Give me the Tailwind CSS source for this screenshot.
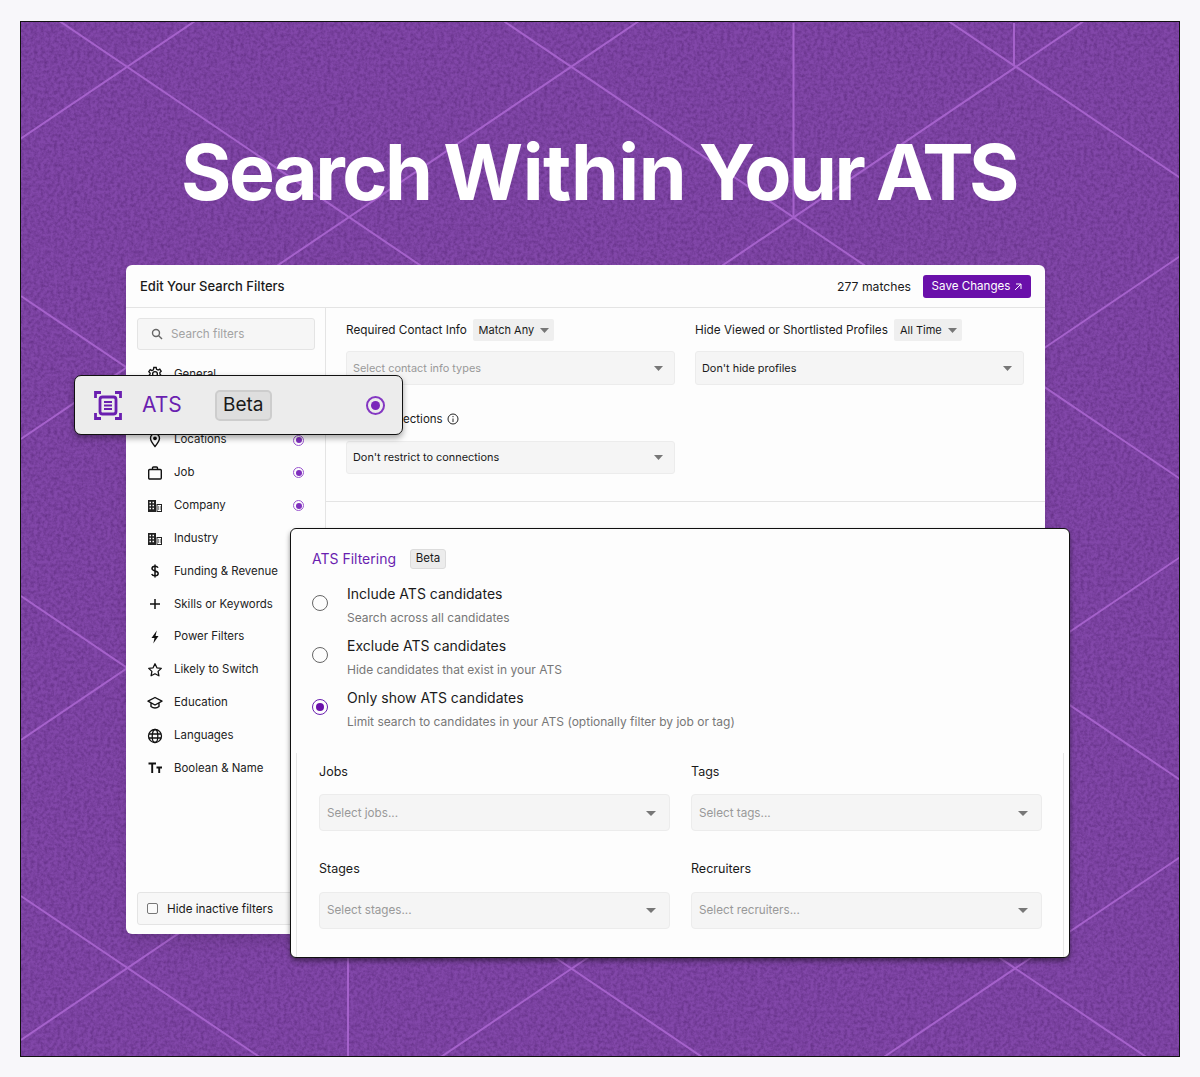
<!DOCTYPE html>
<html lang="en">
<head>
    <meta charset="UTF-8">
    <meta name="viewport" content="width=device-width, initial-scale=1.0">
    <script src="https://cdn.jsdelivr.net/npm/@tailwindcss/browser@4"></script>
    <title>Search Within Your ATS</title>
</head>
<body class="bg-[#f8f7fa] font-['Inter',sans-serif] text-[#1a1a1a]">
    <div class="relative ml-[20px] mt-[21px] w-[1160px] h-[1036px] border border-[#111] bg-[#8247a9] overflow-hidden">

        <!-- backdrop: noise and lattice lines -->
        <svg class="absolute inset-0" width="1160" height="1036" viewBox="20 21 1160 1036" fill="none">
            <filter id="grain" x="0" y="0" width="100%" height="100%" color-interpolation-filters="sRGB">
                <feTurbulence type="fractalNoise" baseFrequency="0.3" numOctaves="3" seed="4"/>
                <feColorMatrix values="0 0 0 0 0.3  0 0 0 0 0.12  0 0 0 0 0.42  0 0 0 0.9 -0.3"/>
            </filter>
            <rect x="20" y="21" width="1160" height="1036" filter="url(#grain)"/>
            <g stroke="#a562cb" stroke-width="2">
                <path d="M20 -6L1200 793M20 295L1200 1093M20 595L800 1123M20 895L300 1084M470 -2L1200 492M900 -12L1200 191"/>
                <path d="M20 137.500L240 -11M20 438L700 -22M20 739L1150 -25.500M20 1039L1200 241M434 1060L1200 542M877 1060L1200 842"/>
                <path d="M792.500 22V217M1013 22V65M347 900V1057"/>
            </g>
        </svg>

        <h1 class="relative pt-[105px] pr-[4px] text-center text-[77px] leading-[90px] font-bold tracking-[-2.500px] [word-spacing:-3px] text-white">Search <span class="tracking-[-0.500px]">Within</span> Your <span class="tracking-[-4.500px]">ATS</span></h1>

        <!-- filters card -->
        <div class="relative ml-[105px] mt-[48px] w-[919px] h-[669px] bg-[#fdfdfd] rounded-md shadow-lg flex flex-col overflow-hidden">
            <div class="h-[43px] shrink-0 flex items-center justify-between pl-[14px] pr-[14px] border-b border-[#e4e4e4]">
                <div class="mt-[2px] text-[13px] font-medium">Edit Your Search Filters</div>
                <div class="flex items-center gap-3">
                    <span class="mt-[2px] text-[12.200px]">277 matches</span>
                    <button class="w-[108px] h-[23px] pt-[1px] bg-[#6a10aa] text-white text-[11.600px] rounded-[3px] flex items-center justify-center gap-1">Save Changes
                        <svg width="8" height="8" viewBox="0 0 8 8" fill="none" stroke="#fff"><path d="M1 7L7 1M2 1H7V6"/></svg>
                    </button>
                </div>
            </div>
            <div class="flex flex-1 min-h-0">
                <aside class="w-[200px] shrink-0 border-r border-[#e4e4e4] pl-[11px] pr-[10px] pt-[10px] flex flex-col">
                    <div class="h-[32px] bg-[#f6f6f6] border border-[#e4e4e4] rounded-[3px] flex items-center pl-[13px] gap-[8px] text-[11.700px] text-[#a3a3a3]">
                        <svg width="12" height="12" viewBox="0 0 12 12" fill="none" stroke="#666" stroke-width="1.400"><circle cx="5" cy="5" r="3.500"/><path d="M7.700 7.700L11 11"/></svg>
                        <span class="mt-[1px]">Search filters</span>
                    </div>
                    <nav class="mt-[8px] text-[11.450px] text-[#222]">
                        <div class="h-[32.830px] flex items-center pl-[10px] gap-[11px]">
                            <svg width="16" height="16" viewBox="0 0 16 16" fill="none" stroke="#111" stroke-width="1.300"><circle cx="8" cy="8" r="2.400"/><path d="M6.800 1.500h2.400l.4 1.900 1.500.7 1.700-1 1.400 2-1.300 1.400v1.600l1.300 1.400-1.400 2-1.700-1-1.500.7-.4 1.900H6.800l-.4-1.900-1.500-.7-1.700 1-1.400-2 1.300-1.400V7L1.800 5.600l1.400-2 1.700 1 1.500-.7z"/></svg>
                            General
                        </div>
                        <div class="h-[32.830px]"></div>
                        <div class="h-[32.830px] flex items-center pl-[10px] gap-[11px]">
                            <svg width="16" height="16" viewBox="0 0 16 16" fill="none" stroke="#111" stroke-width="1.400"><path d="M8 14.500C5.500 11.500 3.500 9 3.500 6.300a4.500 4.500 0 0 1 9 0C12.500 9 10.500 11.500 8 14.500z"/><circle cx="8" cy="6.300" r="1.200" fill="#111"/></svg>
                            <span class="flex-1">Locations</span>
                            <span class="mr-[11px] w-[11px] h-[11px] rounded-full border border-[#9a55cf] flex items-center justify-center"><span class="w-[6px] h-[6px] rounded-full bg-[#7f2fbd]"></span></span>
                        </div>
                        <div class="h-[32.830px] flex items-center pl-[10px] gap-[11px]">
                            <svg width="16" height="16" viewBox="0 0 16 16" fill="none" stroke="#111" stroke-width="1.400"><rect x="1.700" y="4.500" width="12.600" height="9.500" rx="1"/><path d="M5.500 4.500V3a1 1 0 0 1 1-1h3a1 1 0 0 1 1 1v1.500"/></svg>
                            <span class="flex-1">Job</span>
                            <span class="mr-[11px] w-[11px] h-[11px] rounded-full border border-[#9a55cf] flex items-center justify-center"><span class="w-[6px] h-[6px] rounded-full bg-[#7f2fbd]"></span></span>
                        </div>
                        <div class="h-[32.830px] flex items-center pl-[10px] gap-[11px]">
                            <svg width="16" height="16" viewBox="0 0 16 16" fill="#222"><path d="M1 2h8v12H1zM9.500 6H15v8H9.500z"/><path fill="#fff" d="M2.500 3.800h1.500v1.500H2.500zM5.500 3.800H7v1.500H5.500zM2.500 6.800h1.500v1.500H2.500zM5.500 6.800H7v1.500H5.500zM2.500 9.800h1.500v1.500H2.500zM5.500 9.800H7v1.500H5.500zM10.500 7h3.500v6h-3.500z"/><path d="M11 8.500h1v1h-1zM12.800 8.500h1v1h-1zM11 10.500h1v1h-1zM12.800 10.500h1v1h-1z"/></svg>
                            <span class="flex-1">Company</span>
                            <span class="mr-[11px] w-[11px] h-[11px] rounded-full border border-[#9a55cf] flex items-center justify-center"><span class="w-[6px] h-[6px] rounded-full bg-[#7f2fbd]"></span></span>
                        </div>
                        <div class="h-[32.830px] flex items-center pl-[10px] gap-[11px]">
                            <svg width="16" height="16" viewBox="0 0 16 16" fill="#222"><path d="M1 2h8v12H1zM9.500 6H15v8H9.500z"/><path fill="#fff" d="M2.500 3.800h1.500v1.500H2.500zM5.500 3.800H7v1.500H5.500zM2.500 6.800h1.500v1.500H2.500zM5.500 6.800H7v1.500H5.500zM2.500 9.800h1.500v1.500H2.500zM5.500 9.800H7v1.500H5.500zM10.500 7h3.500v6h-3.500z"/><path d="M11 8.500h1v1h-1zM12.800 8.500h1v1h-1zM11 10.500h1v1h-1zM12.800 10.500h1v1h-1z"/></svg>
                            Industry
                        </div>
                        <div class="h-[32.830px] flex items-center pl-[10px] gap-[11px]">
                            <svg width="16" height="16" viewBox="0 0 16 16" fill="none" stroke="#111" stroke-width="1.500"><path d="M8 1.500v13M11 4.800C10.500 3.700 9.400 3.200 8 3.200c-1.800 0-3 .9-3 2.300 0 3.200 6.200 1.700 6.200 5 0 1.400-1.300 2.300-3.200 2.300-1.600 0-2.800-.6-3.300-1.800"/></svg>
                            Funding &amp; Revenue
                        </div>
                        <div class="h-[32.830px] flex items-center pl-[10px] gap-[11px]">
                            <svg width="16" height="16" viewBox="0 0 16 16" fill="none" stroke="#111" stroke-width="1.500"><path d="M8 3v10M3 8h10"/></svg>
                            Skills or Keywords
                        </div>
                        <div class="h-[32.830px] flex items-center pl-[10px] gap-[11px]">
                            <svg width="16" height="16" viewBox="0 0 16 16" fill="#111"><path d="M9.800 1.500L4.500 9h3l-1.200 5.500L11.500 7H8.500z"/></svg>
                            Power Filters
                        </div>
                        <div class="h-[32.830px] flex items-center pl-[10px] gap-[11px]">
                            <svg width="16" height="16" viewBox="0 0 16 16" fill="none" stroke="#111" stroke-width="1.300" stroke-linejoin="round"><path d="M8 1.800l1.900 4 4.400.6-3.200 3 .8 4.400L8 11.700l-3.900 2.100.8-4.400-3.200-3 4.400-.6z"/></svg>
                            Likely to Switch
                        </div>
                        <div class="h-[32.830px] flex items-center pl-[10px] gap-[11px]">
                            <svg width="16" height="16" viewBox="0 0 16 16" fill="none" stroke="#111" stroke-width="1.400" stroke-linejoin="round"><path d="M8 2.500L1 6.200 8 10l7-3.800zM4 8v3.500c1.200 1 2.500 1.500 4 1.500s2.800-.5 4-1.500V8"/></svg>
                            Education
                        </div>
                        <div class="h-[32.830px] flex items-center pl-[10px] gap-[11px]">
                            <svg width="16" height="16" viewBox="0 0 16 16" fill="none" stroke="#111" stroke-width="1.300"><circle cx="8" cy="8" r="6.500"/><ellipse cx="8" cy="8" rx="2.800" ry="6.500"/><path d="M1.800 6h12.400M1.800 10h12.400"/></svg>
                            Languages
                        </div>
                        <div class="h-[32.830px] flex items-center pl-[10px] gap-[11px]">
                            <svg width="16" height="16" viewBox="0 0 16 16" fill="none" stroke="#111" stroke-width="1.900"><path d="M1.500 3.500h7.500M5.200 3.500V13M9.500 7.500h5.500M12.200 7.500V13"/></svg>
                            Boolean &amp; Name
                        </div>
                    </nav>
                    <div class="mt-auto mb-[9px] h-[33px] w-[200px] shrink-0 bg-[#f7f7f7] border border-[#e4e4e4] rounded-[3px] flex items-center pl-[9px] gap-[9px] text-[11.700px]">
                        <span class="w-[11px] h-[11px] border border-[#777] rounded-[2px] bg-[#fafafa]"></span>
                        <span class="mt-[2px]">Hide inactive filters</span>
                    </div>
                </aside>

                <main class="flex-1 min-w-0">
                    <div class="pl-[20px] pr-[21px] h-[194px] border-b border-[#e4e4e4] grid grid-cols-[329px_329px] gap-x-[20px] content-start">
                        <div class="pt-[11px]">
                            <div class="flex items-center gap-[6px] text-[11.750px] h-[22px]">
                                <span class="mt-[2px]">Required Contact Info</span>
                                <span class="w-[81px] h-[22px] pl-[1px] bg-[#efefef] rounded-[2px] text-[11px] flex items-center justify-center gap-[6px]">Match Any
                                    <svg width="9" height="5" viewBox="0 0 9 5" fill="#777"><path d="M0 0h9L4.500 5z"/></svg>
                                </span>
                            </div>
                            <div class="mt-[10px] h-[34px] bg-[#f5f5f5] border border-[#ececec] rounded-[3px] flex items-center justify-between pl-[6px] pr-[11px] text-[10.900px] text-[#999]">
                                Select contact info types
                                <svg width="9" height="5" viewBox="0 0 9 5" fill="#777"><path d="M0 0h9L4.500 5z"/></svg>
                            </div>
                        </div>
                        <div class="pt-[11px]">
                            <div class="flex items-center gap-[6px] text-[11.750px] h-[22px]">
                                <span class="mt-[2px]">Hide Viewed or Shortlisted Profiles</span>
                                <span class="w-[68px] h-[22px] pl-[1px] bg-[#efefef] rounded-[2px] text-[11px] flex items-center justify-center gap-[6px]">All Time
                                    <svg width="9" height="5" viewBox="0 0 9 5" fill="#777"><path d="M0 0h9L4.500 5z"/></svg>
                                </span>
                            </div>
                            <div class="mt-[10px] h-[34px] bg-[#f5f5f5] border border-[#ececec] rounded-[3px] flex items-center justify-between pl-[6px] pr-[11px] text-[10.900px]">
                                Don't hide profiles
                                <svg width="9" height="5" viewBox="0 0 9 5" fill="#777"><path d="M0 0h9L4.500 5z"/></svg>
                            </div>
                        </div>
                        <div class="pt-[23px]">
                            <div class="flex items-center gap-[4px] text-[11.500px] h-[22px]">
                                <span class="mt-[2px]">Your Connections</span>
                                <svg width="12" height="12" viewBox="0 0 12 12" fill="none" stroke="#222"><circle cx="6" cy="6" r="5"/><path d="M6 5.500V9M6 3v1.200"/></svg>
                            </div>
                            <div class="mt-[11px] h-[33px] bg-[#f5f5f5] border border-[#ececec] rounded-[3px] flex items-center justify-between pl-[6px] pr-[11px] text-[10.900px]">
                                Don't restrict to connections
                                <svg width="9" height="5" viewBox="0 0 9 5" fill="#777"><path d="M0 0h9L4.500 5z"/></svg>
                            </div>
                        </div>
                    </div>
                </main>
            </div>
        </div>

        <!-- ATS nav row, blown up over the card -->
        <div class="absolute left-[53px] top-[353px] w-[329px] h-[60px] bg-[#ececec] border-[1.500px] border-[#111] rounded-[7px] shadow-[0_3px_6px_rgba(0,0,0,0.35)] flex items-center pl-[19px]">
            <svg width="28" height="29" viewBox="0 0 28 29" fill="none" stroke="#6a1fb0" stroke-width="2.800">
                <path d="M1.500 7V1.500h5.500M21 1.500h5.500V7M1.500 22v5.500h5.500M21 27.500h5.500V22"/>
                <rect x="6" y="6" width="16" height="17" rx="2.500"/>
                <path d="M10 11h8M10 14.500h8M10 18h8" stroke-width="2"/>
            </svg>
            <span class="ml-[20px] text-[21px] text-[#6a1fb0]">ATS</span>
            <span class="ml-[33px] w-[57px] h-[31px] pt-[1px] bg-[#dedede] border-2 border-[#cdcdcd] rounded-[5px] text-[19px] flex items-center justify-center">Beta</span>
            <span class="ml-[94px] w-[19px] h-[19px] rounded-full border-[2.500px] border-[#8437c2] flex items-center justify-center"><span class="w-[9px] h-[9px] rounded-full bg-[#7a28ba]"></span></span>
        </div>

        <!-- ATS filtering panel -->
        <div class="absolute left-[269px] top-[506px] w-[780px] h-[430px] bg-[#fdfdfd] border-[1.500px] border-[#111] rounded-[6px] shadow-[0_3px_5px_rgba(0,0,0,0.45)] pl-[21px] pr-[27px]">
            <div class="flex items-center h-[20px] mt-[20px] gap-[14px]">
                <span class="-mt-[1px] text-[14px] text-[#6a1fb0]">ATS Filtering</span>
                <span class="w-[36px] h-[20px] bg-[#ececec] border border-[#dcdcdc] rounded-[3px] text-[11.500px] flex items-center justify-center">Beta</span>
            </div>
            <div class="mt-[15px] flex flex-col">
                <label class="h-[52px] flex items-start gap-[19px]">
                    <span class="mt-[11px] w-[16px] h-[16px] rounded-full border-[1.500px] border-[#666]"></span>
                    <span class="flex flex-col">
                        <span class="text-[14px] leading-[20px]">Include ATS candidates</span>
                        <span class="mt-[6px] text-[12px] leading-[15px] text-[#777]">Search across all candidates</span>
                    </span>
                </label>
                <label class="h-[52px] flex items-start gap-[19px]">
                    <span class="mt-[11px] w-[16px] h-[16px] rounded-full border-[1.500px] border-[#666]"></span>
                    <span class="flex flex-col">
                        <span class="text-[14px] leading-[20px]">Exclude ATS candidates</span>
                        <span class="mt-[6px] text-[12px] leading-[15px] text-[#777]">Hide candidates that exist in your ATS</span>
                    </span>
                </label>
                <label class="h-[52px] flex items-start gap-[19px]">
                    <span class="mt-[11px] w-[16px] h-[16px] rounded-full border-[1.500px] border-[#6a1fb0] flex items-center justify-center"><span class="w-[8px] h-[8px] rounded-full bg-[#6a10aa]"></span></span>
                    <span class="flex flex-col">
                        <span class="text-[14px] leading-[20px]">Only show ATS candidates</span>
                        <span class="mt-[6px] text-[12px] leading-[15px] text-[#777]">Limit search to candidates in your ATS (optionally filter by job or tag)</span>
                    </span>
                </label>
            </div>
            <div class="absolute left-[5px] right-[5px] top-[224px] bottom-0 border-x border-[#e6e6e6] pl-[22px] pr-[21px] grid grid-cols-[351px_351px] gap-x-[21px] content-start">
                <div class="pt-[10px]">
                    <div class="text-[12.500px] leading-[18px]">Jobs</div>
                    <div class="mt-[13px] h-[37px] pt-[2px] bg-[#f5f5f5] border border-[#ececec] rounded-[4px] flex items-center justify-between pl-[7px] pr-[13px] text-[11.700px] text-[#999]">
                        Select jobs...
                        <svg width="10" height="5" viewBox="0 0 10 5" fill="#777"><path d="M0 0h10L5 5z"/></svg>
                    </div>
                </div>
                <div class="pt-[10px]">
                    <div class="text-[12.500px] leading-[18px]">Tags</div>
                    <div class="mt-[13px] h-[37px] pt-[2px] bg-[#f5f5f5] border border-[#ececec] rounded-[4px] flex items-center justify-between pl-[7px] pr-[13px] text-[11.700px] text-[#999]">
                        Select tags...
                        <svg width="10" height="5" viewBox="0 0 10 5" fill="#777"><path d="M0 0h10L5 5z"/></svg>
                    </div>
                </div>
                <div class="pt-[29px]">
                    <div class="text-[12.500px] leading-[18px]">Stages</div>
                    <div class="mt-[14px] h-[37px] bg-[#f5f5f5] border border-[#ececec] rounded-[4px] flex items-center justify-between pl-[7px] pr-[13px] text-[11.700px] text-[#999]">
                        Select stages...
                        <svg width="10" height="5" viewBox="0 0 10 5" fill="#777"><path d="M0 0h10L5 5z"/></svg>
                    </div>
                </div>
                <div class="pt-[29px]">
                    <div class="text-[12.500px] leading-[18px]">Recruiters</div>
                    <div class="mt-[14px] h-[37px] bg-[#f5f5f5] border border-[#ececec] rounded-[4px] flex items-center justify-between pl-[7px] pr-[13px] text-[11.700px] text-[#999]">
                        Select recruiters...
                        <svg width="10" height="5" viewBox="0 0 10 5" fill="#777"><path d="M0 0h10L5 5z"/></svg>
                    </div>
                </div>
            </div>
        </div>
    </div>
</body>
</html>
